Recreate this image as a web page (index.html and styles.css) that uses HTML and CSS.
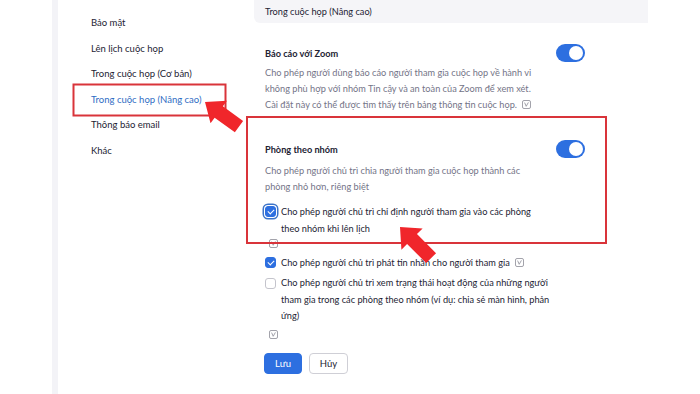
FILE: index.html
```html
<!DOCTYPE html>
<html lang="vi">

<head>
    <meta charset="UTF-8">
    <meta name="viewport" content="width=device-width, initial-scale=1.0">
    <title>Cài đặt cuộc họp</title>
    <link rel="stylesheet" href="styles.css">
</head>

<body>
    <div class="page">
        <div class="rail"></div>
        <nav class="sidebar">
            <a class="nav-item">Bảo mật</a>
            <a class="nav-item">Lên lịch cuộc họp</a>
            <a class="nav-item">Trong cuộc họp (Cơ bản)</a>
            <a class="nav-item active">Trong cuộc họp (Nâng cao)</a>
            <a class="nav-item">Thông báo email</a>
            <a class="nav-item">Khác</a>
        </nav>

        <main class="main">
            <div class="section-head">Trong cuộc họp (Nâng cao)</div>

            <!-- bao cao voi zoom -->
            <div class="setting report">
                <div class="setting-top">
                    <div class="setting-title">Báo cáo với Zoom</div>
                    <span class="toggle on"></span>
                </div>
                <p class="setting-desc">Cho phép người dùng báo cáo người tham gia cuộc họp về hành vi<br>không phù hợp với nhóm Tin cậy và an toàn của Zoom để xem xét.<br>Cài đặt này có thể được tìm thấy trên bảng thông tin cuộc họp.
                    <svg class="info" viewBox="0 0 9 9"><rect x="0.5" y="0.5" width="8" height="8" rx="1.5"/><path d="M2.6 2.6 L4.2 6.3 L6.4 2.4"/></svg>
                </p>
            </div>

            <!-- phong theo nhom -->
            <div class="setting breakout">
                <div class="setting-top">
                    <div class="setting-title">Phòng theo nhóm</div>
                    <span class="toggle on"></span>
                </div>
                <p class="setting-desc">Cho phép người chủ trì chia người tham gia cuộc họp thành các<br>phòng nhỏ hơn, riêng biệt</p>

                <label class="check-row first">
                    <span class="cbox checked focus"></span>
                    <span class="check-text">Cho phép người chủ trì chỉ định người tham gia vào các phòng<br>theo nhóm khi lên lịch</span>
                </label>
                <div class="info-line">
                    <svg class="info" viewBox="0 0 9 9"><rect x="0.5" y="0.5" width="8" height="8" rx="1.5"/><path d="M2.6 2.6 L4.2 6.3 L6.4 2.4"/></svg>
                </div>

                <label class="check-row second">
                    <span class="cbox checked"></span>
                    <span class="check-text">Cho phép người chủ trì phát tin nhắn cho người tham gia
                        <svg class="info" viewBox="0 0 9 9"><rect x="0.5" y="0.5" width="8" height="8" rx="1.5"/><path d="M2.6 2.6 L4.2 6.3 L6.4 2.4"/></svg></span>
                </label>

                <label class="check-row third">
                    <span class="cbox"></span>
                    <span class="check-text">Cho phép người chủ trì xem trạng thái hoạt động của những người<br>tham gia trong các phòng theo nhóm (ví dụ: chia sẻ màn hình, phản<br>ứng)</span>
                </label>
                <div class="info-line">
                    <svg class="info" viewBox="0 0 9 9"><rect x="0.5" y="0.5" width="8" height="8" rx="1.5"/><path d="M2.6 2.6 L4.2 6.3 L6.4 2.4"/></svg>
                </div>

                <div class="actions">
                    <button class="btn primary">Lưu</button>
                    <button class="btn">Hủy</button>
                </div>
            </div>
        </main>

        <!-- cac dau danh dau mau do -->
        <svg class="marks" viewBox="0 0 700 394">
            <rect class="mark-box" x="73.5" y="84.5" width="152" height="31"/>
            <rect class="mark-box" x="247" y="117" width="359" height="126"/>
            <polygon class="mark-arrow" transform="translate(205 102) rotate(36)" points="0,0 17,-14 17,-7 42,-7 42,7 17,7 17,14"/>
            <polygon class="mark-arrow" transform="translate(400 227) rotate(45)" points="0,0 17,-15 17,-7 44,-7 44,7 17,7 17,15"/>
        </svg>
    </div>
</body>

</html>
```

FILE: styles.css
```css
* {
    margin: 0;
    padding: 0;
    box-sizing: border-box;
}

body {
    background-color: #fff;
    font-family: Lato, "Noto Sans", sans-serif;
    font-size: 9.2px;
    color: #232333;
}

.page {
    position: relative;
    width: 700px;
    height: 394px;
    display: flex;
    padding-left: 52px;
    overflow: hidden;
}

.rail {
    width: 6px;
    background-color: #f3f3f7;
}

.sidebar {
    width: 196px;
    padding-top: 10px;
    display: flex;
    flex-direction: column;
    font-size: 9.5px;
}

.nav-item {
    padding-left: 33px;
    line-height: 25.6px;
    color: #232333;
}

.nav-item.active {
    color: #2f6dc4;
}

.main {
    width: 394px;
}

.section-head {
    height: 23px;
    line-height: 24px;
    padding-left: 11px;
    background-color: #f5f5f8;
    border-radius: 0 0 0 6px;
    color: #232333;
}

.setting {
    padding-left: 11px;
    width: 331px;
}

.report {
    margin-top: 23px;
}

.breakout {
    margin-top: 29px;
}

.setting-top {
    display: flex;
    justify-content: space-between;
    align-items: center;
    height: 16px;
}

.setting-title {
    font-weight: bold;
    line-height: 16px;
}

.toggle {
    width: 29px;
    height: 18px;
    border-radius: 9px;
    background-color: #2d6fe0;
    position: relative;
    margin-top: -2px;
}

.toggle::after {
    content: "";
    position: absolute;
    top: 2px;
    right: 2px;
    width: 14px;
    height: 14px;
    border-radius: 50%;
    background-color: #fff;
}

.setting-desc {
    margin-top: 3px;
    line-height: 16px;
    color: #747487;
    white-space: nowrap;
}

.breakout .setting-desc {
    margin-top: 5px;
    line-height: 15.5px;
}

.info {
    width: 9px;
    height: 9px;
    vertical-align: -1px;
    margin-left: 3px;
    fill: none;
    stroke: #8b8b96;
    stroke-width: 0.8;
}

.check-row {
    display: flex;
    align-items: flex-start;
}

.check-row.first {
    margin-top: 9px;
    line-height: 17px;
}

.check-row.second {
    margin-top: 3px;
    line-height: 17px;
}

.check-row.third {
    margin-top: 4px;
    line-height: 16.5px;
}

.cbox {
    flex: none;
    width: 11px;
    height: 11px;
    margin-top: 3px;
    margin-right: 5px;
    border: 1px solid #c4c4cc;
    border-radius: 3px;
    background-color: #fff;
    position: relative;
}

.cbox.checked {
    background-color: #2d6fe0;
    border-color: #2d6fe0;
}

.cbox.checked::after {
    content: "";
    position: absolute;
    left: 3px;
    top: 1px;
    width: 3px;
    height: 5px;
    border: solid #fff;
    border-width: 0 1.5px 1.5px 0;
    transform: rotate(45deg);
}

.cbox.focus {
    box-shadow: 0 0 0 1px #fff, 0 0 0 2.5px #3d74c8;
}

.check-text {
    color: #232333;
    white-space: nowrap;
}

.info-line {
    height: 14px;
    padding-left: 1px;
    line-height: 14px;
}

.info-line .info {
    margin-left: 3px;
}

.check-row.third + .info-line {
    margin-top: 3px;
}

.actions {
    display: flex;
    gap: 7px;
    margin-top: 11px;
    margin-left: -1px;
}

.btn {
    height: 21px;
    width: 39px;
    border: 1px solid #cfcfd6;
    border-radius: 4px;
    background-color: #fff;
    font-family: Lato, "Noto Sans", sans-serif;
    font-size: 9.5px;
    color: #232333;
}

.btn.primary {
    width: 38px;
    background-color: #2d6fe0;
    border-color: #2d6fe0;
    color: #fff;
}

.marks {
    position: absolute;
    left: 0;
    top: 0;
    width: 700px;
    height: 394px;
    pointer-events: none;
}

.mark-box {
    fill: none;
    stroke: #d9343a;
    stroke-width: 2;
}

.mark-arrow {
    fill: #f0262b;
}
```
